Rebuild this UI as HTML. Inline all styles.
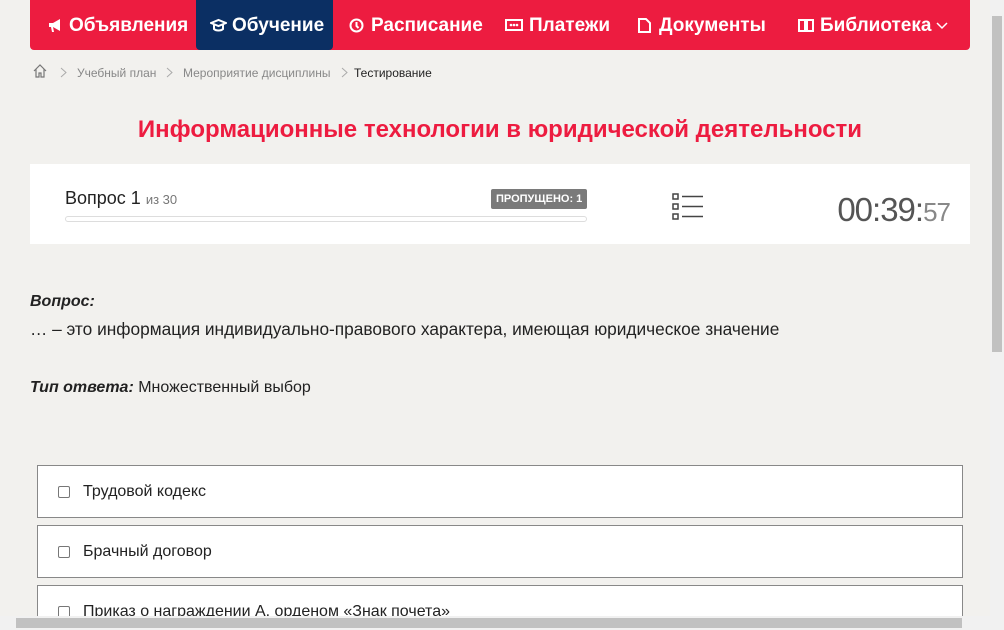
<!DOCTYPE html>
<html><head><meta charset="utf-8"><style>
*{box-sizing:border-box;margin:0;padding:0}
html,body{width:1004px;height:630px;overflow:hidden}
body{background:#f2f1ee;font-family:"Liberation Sans",sans-serif;position:relative;color:#222}
.nav{position:absolute;left:30px;top:0;width:940px;height:50px;background:#ed1c40;border-radius:0 0 4px 4px}
.nav div{color:#fff;font-size:19px;font-weight:bold;height:50px;line-height:52px;position:absolute;white-space:nowrap}
.nav svg{position:absolute;top:18px}
.act{position:absolute;left:166px;top:0;width:137px;height:50px;background:#0b2f63;border-radius:0 0 4px 4px}
.bc{position:absolute;top:66px;left:32px;font-size:12px;color:#888}
.bc span{position:absolute;white-space:nowrap}
.bc svg{position:absolute;top:1px}
h1{position:absolute;top:116px;left:0;width:1000px;text-align:center;color:#ed1c40;font-size:24px;font-weight:bold}
.card{position:absolute;left:30px;top:164px;width:940px;height:80px;background:#fff}
.opt{position:absolute;left:37px;width:926px;height:53px;border:1px solid #888;background:#fff;font-size:16px}
.opt i{position:absolute;left:20px;top:20px;width:12px;height:12px;border:1px solid #777;border-radius:2px;background:#fff}
.opt span{position:absolute;left:45px;top:17px}
</style></head><body>
<div class="nav">
<div class="act"></div>
<svg style="left:18px" width="15" height="15" viewBox="0 0 15 15"><path d="M1 5h4l7-4v12l-7-4H1z M3 9l1 5h2l-1-5" fill="#fff"/></svg>
<div style="left:39px">Объявления</div>
<svg style="left:180px" width="17" height="15" viewBox="0 0 17 15"><path d="M1 5l7.5-3 7.5 3-7.5 3z M4 7v4c2 2 7 2 9 0V7" fill="none" stroke="#fff" stroke-width="2"/></svg>
<div style="left:202px">Обучение</div>
<svg style="left:319px" width="15" height="15" viewBox="0 0 15 15"><circle cx="7.5" cy="7.5" r="6" fill="none" stroke="#fff" stroke-width="2"/><path d="M7.5 4v4l2 2" fill="none" stroke="#fff" stroke-width="2"/></svg>
<div style="left:341px">Расписание</div>
<svg style="left:475px" width="18" height="14" viewBox="0 0 18 14"><rect x="1" y="2" width="16" height="10" fill="none" stroke="#fff" stroke-width="2"/><circle cx="6" cy="7" r="1.3" fill="#fff"/><circle cx="9" cy="7" r="1.3" fill="#fff"/><circle cx="12" cy="7" r="1.3" fill="#fff"/></svg>
<div style="left:499px">Платежи</div>
<svg style="left:608px" width="13" height="15" viewBox="0 0 13 15"><path d="M1 1h7l4 4v9H1z" fill="none" stroke="#fff" stroke-width="2"/></svg>
<div style="left:629px">Документы</div>
<svg style="left:768px" width="16" height="15" viewBox="0 0 16 15"><path d="M1 2h6v11H1z M9 2h6v11H9z M8 2v12" fill="none" stroke="#fff" stroke-width="2"/></svg>
<div style="left:790px">Библиотека</div>
<svg style="left:906px;top:22px" width="12" height="8" viewBox="0 0 12 8"><path d="M1 1l5 5 5-5" fill="none" stroke="#fff" stroke-width="1.5"/></svg>
</div>
<div class="bc">
<svg style="left:1px;top:-2px" width="14" height="14" viewBox="0 0 14 14"><path d="M1 7L7 1l6 6M3 5v8h3V9h2v4h3V5" fill="none" stroke="#777" stroke-width="1.2"/></svg>
<svg style="left:28px" width="7" height="11"><path d="M1 1l5 4.5L1 10" fill="none" stroke="#aaa"/></svg><span style="left:45px">Учебный план</span>
<svg style="left:134px" width="7" height="11"><path d="M1 1l5 4.5L1 10" fill="none" stroke="#aaa"/></svg><span style="left:151px">Мероприятие дисциплины</span>
<svg style="left:309px" width="7" height="11"><path d="M1 1l5 4.5L1 10" fill="none" stroke="#aaa"/></svg><span style="left:322px;color:#222">Тестирование</span>
</div>
<h1>Информационные технологии в юридической деятельности</h1>
<div class="card">
<div style="position:absolute;left:35px;top:24px;font-size:18px">Вопрос 1 <span style="font-size:13px;color:#777">из 30</span></div>
<div style="position:absolute;left:461px;top:25px;background:#7a7a7a;color:#fff;font-size:11px;font-weight:bold;padding:4px 5px;border-radius:2px">ПРОПУЩЕНО: 1</div>
<div style="position:absolute;left:35px;top:52px;width:522px;height:6px;border:1px solid #ddd;border-radius:3px"></div>
<svg style="position:absolute;left:642px;top:29px" width="32" height="28"><g fill="none" stroke="#444" stroke-width="1.5"><rect x="1" y="1" width="5" height="5"/><rect x="1" y="11" width="5" height="5"/><rect x="1" y="21" width="5" height="5"/><path d="M10 3.5H31M10 13.5H31M10 23.5H31"/></g></svg>
<div style="position:absolute;right:20px;top:27px;font-size:33px;color:#555;letter-spacing:-1px">00:39:<span style="font-size:26px;color:#888">57</span></div>
</div>
<div style="position:absolute;left:30px;top:293px;font-size:16px;font-weight:bold;font-style:italic">Вопрос:</div>
<div style="position:absolute;left:30px;top:319px;font-size:17.3px">… – это информация индивидуально-правового характера, имеющая юридическое значение</div>
<div style="position:absolute;left:30px;top:379px;font-size:16px"><b><i>Тип ответа:</i></b> Множественный выбор</div>
<div class="opt" style="top:465px"><i></i><span>Трудовой кодекс</span></div>
<div class="opt" style="top:525px"><i></i><span>Брачный договор</span></div>
<div class="opt" style="top:585px"><i></i><span>Приказ о награждении А. орденом «Знак почета»</span></div>
<div style="position:absolute;right:0;top:0;width:14px;height:630px;background:#f1f1f1"><div style="position:absolute;left:2px;top:16px;width:10px;height:336px;background:#c1c1c1"></div></div>
<div style="position:absolute;left:0;top:616px;width:1004px;height:14px;background:#f1f1f1"><div style="position:absolute;left:16px;top:2px;width:946px;height:10px;background:#c1c1c1"></div></div>
</body></html>
